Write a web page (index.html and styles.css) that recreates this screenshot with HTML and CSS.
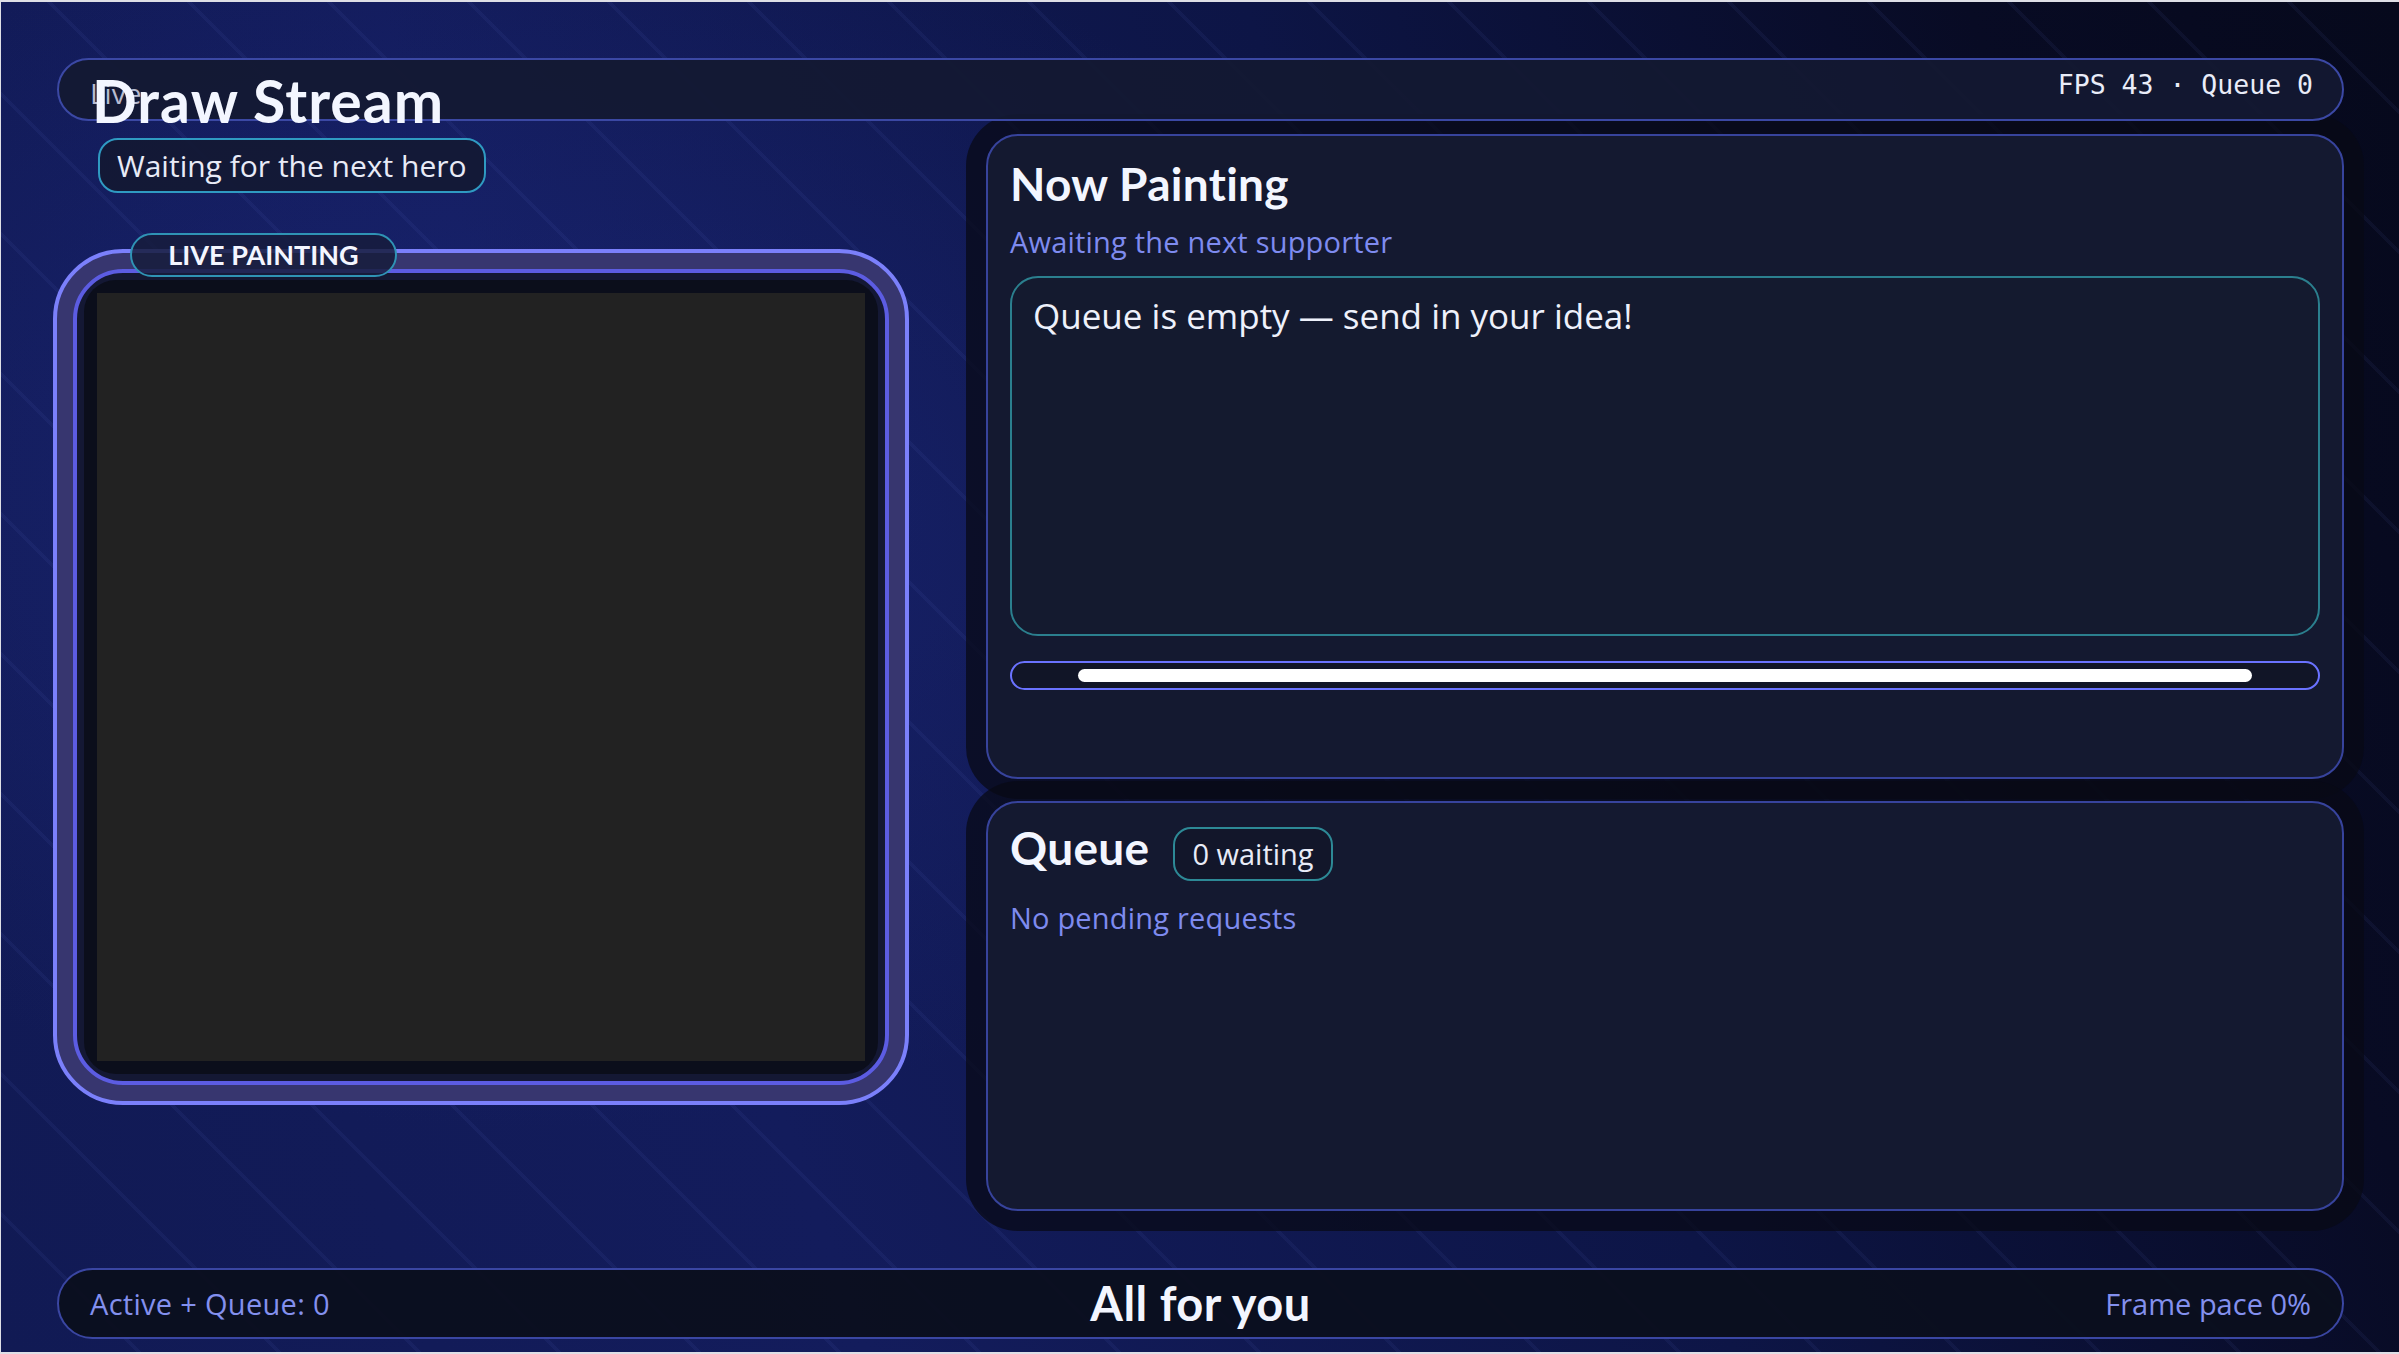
FILE: index.html
```html
<!DOCTYPE html>
<html lang="en">
<head>
<meta charset="utf-8">
<title>Draw Stream</title>
<link rel="stylesheet" href="styles.css">
</head>
<body>
<div class="app">
  <header class="topbar">
    <div class="brand">
      <span class="brand-live">Live</span>
      <h1 class="brand-title">Draw Stream</h1>
    </div>
    <div class="stats">FPS 43 · Queue 0</div>
  </header>
  <main class="stage">
    <section class="left">
      <div class="status-pill">Waiting for the next hero</div>
      <div class="frame">
        <span class="frame-badge">LIVE PAINTING</span>
        <div class="frame-inner">
          <div class="screen">
            <div class="canvas"></div>
          </div>
        </div>
      </div>
    </section>
    <section class="right">
      <article class="panel panel-now">
        <h2 class="panel-title">Now Painting</h2>
        <p class="panel-sub">Awaiting the next supporter</p>
        <div class="prompt">Queue is empty — send in your idea!</div>
        <div class="progress"><div class="progress-fill"></div></div>
      </article>
      <article class="panel panel-queue">
        <div class="queue-head">
          <h2 class="panel-title">Queue</h2>
          <span class="count-pill">0 waiting</span>
        </div>
        <p class="panel-sub panel-sub-queue">No pending requests</p>
      </article>
    </section>
  </main>
  <footer class="footbar">
    <span class="foot-left">Active + Queue: 0</span>
    <span class="foot-center">All for you</span>
    <span class="foot-right">Frame pace 0%</span>
  </footer>
</div>
</body>
</html>
```

FILE: styles.css
```css
* { box-sizing: border-box; }

html, body { margin: 0; padding: 0; }

body {
  width: 2399px;
  height: 1354px;
  overflow: hidden;
  background: #dedfe6;
  font-family: "Open Sans", "Noto Sans", sans-serif;
  color: #eef1fc;
}

.app {
  margin: 2px 0 0 1px;
  width: 2398px;
  height: 1350px;
  padding: 56px 55px 13px 56px;
  display: flex;
  flex-direction: column;
  background:
    repeating-linear-gradient(45deg, rgba(120, 140, 255, 0) 0 96px, rgba(120, 140, 255, 0.06) 96px 99px),
    radial-gradient(ellipse 55% 65% at 22% 38%, rgba(30, 42, 128, 0.55), rgba(30, 42, 128, 0) 70%),
    linear-gradient(70deg, #111a54 0%, #131c5c 30%, #0d1546 60%, #080b24 85%, #06091c 100%);
}

/* Header */
.topbar {
  position: relative;
  z-index: 3;
  height: 63px;
  flex: 0 0 auto;
  border: 2px solid #3b48a4;
  border-radius: 40px;
  background: rgba(19, 25, 50, 0.93);
  display: flex;
  justify-content: space-between;
  align-items: flex-start;
  padding: 11px 29px 0 33px;
}

.brand { position: relative; }

.brand-live {
  position: absolute;
  left: -2px;
  top: 8px;
  font-size: 28px;
  line-height: 1;
  color: #b7bbd0;
  white-space: nowrap;
}

.brand-title {
  position: relative;
  margin: 0;
  font-family: Lato, "Open Sans", sans-serif;
  font-size: 59px;
  line-height: 1;
  font-weight: 700;
  letter-spacing: 1px;
  color: #f3f6ff;
  white-space: nowrap;
}

.stats {
  margin-top: 1px;
  font-family: "DejaVu Sans Mono", "Liberation Mono", monospace;
  font-size: 26.5px;
  line-height: 1;
  color: #e9ecf8;
  white-space: nowrap;
}

/* Main stage */
.stage {
  flex: 1 1 auto;
  margin: 13px 0 57px;
  display: grid;
  grid-template-columns: 852px 1fr;
  column-gap: 77px;
  min-height: 0;
}

.left {
  display: flex;
  flex-direction: column;
  align-items: flex-start;
}

.status-pill {
  margin: 4px 0 0 41px;
  border: 2px solid #2f9ac2;
  border-radius: 20px;
  background: rgba(19, 24, 50, 0.9);
  padding: 8px 17px;
  font-size: 30px;
  line-height: 35px;
  color: #e8ebf7;
  white-space: nowrap;
}

.frame {
  position: relative;
  margin: 56px 0 0 -4px;
  width: 856px;
  height: 856px;
  border: 4px solid #7b80fb;
  border-radius: 70px;
  background: #37366f;
  padding: 16px;
}

.frame-badge {
  position: absolute;
  left: 73px;
  top: -20px;
  z-index: 2;
  width: 267px;
  height: 44px;
  border: 2px solid #2f93b5;
  border-radius: 22px;
  background: rgba(22, 28, 60, 0.85);
  text-align: center;
  font-family: Lato, "Open Sans", sans-serif;
  font-size: 27px;
  font-weight: 700;
  line-height: 40px;
  color: #f4f6ff;
  white-space: nowrap;
}

.frame-inner {
  border: 4px solid #5c5ce2;
  border-radius: 50px;
  background: #141834;
  padding: 7px;
}

.screen {
  background: #0b0e1b;
  border-radius: 32px;
  padding: 13px;
}

.canvas {
  width: 768px;
  height: 768px;
  background: #222222;
}

/* Right column */
.right {
  display: flex;
  flex-direction: column;
  gap: 22px;
  min-height: 0;
}

.panel {
  border: 2px solid #37439c;
  border-radius: 32px;
  background: #141930;
  box-shadow: 0 0 0 20px rgba(8, 10, 22, 0.75);
  padding: 25px 22px;
}

.panel-now {
  height: 645px;
  flex: 0 0 auto;
}

.panel-queue {
  flex: 1 1 auto;
  padding-top: 22px;
}

.panel-title {
  margin: 0;
  font-family: Lato, "Open Sans", sans-serif;
  font-size: 46px;
  line-height: 1;
  font-weight: 700;
  letter-spacing: 0.3px;
  color: #f3f6ff;
}

.panel-sub {
  margin: 20px 0 0;
  font-size: 29px;
  line-height: 1;
  letter-spacing: 0.2px;
  color: #7e8bef;
}

.panel-sub-queue { margin-top: 22px; }

.prompt {
  margin-top: 20px;
  height: 360px;
  border: 2px solid #2b7f8e;
  border-radius: 28px;
  background: #141a2f;
  padding: 15px 21px;
  font-size: 35px;
  line-height: 1.3;
  color: #eef1fb;
}

.progress {
  margin-top: 25px;
  height: 29px;
  border: 2px solid #6a72ff;
  border-radius: 15px;
  background: #111527;
  padding: 6px 66px;
}

.progress-fill {
  height: 13px;
  border-radius: 7px;
  background: #ffffff;
}

.queue-head {
  display: flex;
  align-items: baseline;
  gap: 24px;
}

.count-pill {
  border: 2px solid #2d8996;
  border-radius: 18px;
  background: #12162a;
  padding: 8px 17px;
  font-size: 29px;
  line-height: 34px;
  color: #e8ebf7;
  white-space: nowrap;
}

/* Footer */
.footbar {
  flex: 0 0 auto;
  height: 71px;
  border: 2px solid #3a46a2;
  border-radius: 40px;
  background: rgba(11, 15, 30, 0.95);
  display: grid;
  grid-template-columns: 1fr auto 1fr;
  align-items: center;
  padding: 0 31px;
}

.foot-left {
  font-size: 29px;
  line-height: 1;
  letter-spacing: 0.3px;
  color: #8390ee;
}

.foot-center {
  font-family: Lato, "Open Sans", sans-serif;
  font-size: 47px;
  line-height: 1;
  font-weight: 700;
  letter-spacing: 0.5px;
  color: #f3f6ff;
}

.foot-right {
  text-align: right;
  font-size: 29px;
  line-height: 1;
  color: #8390ee;
}
```
